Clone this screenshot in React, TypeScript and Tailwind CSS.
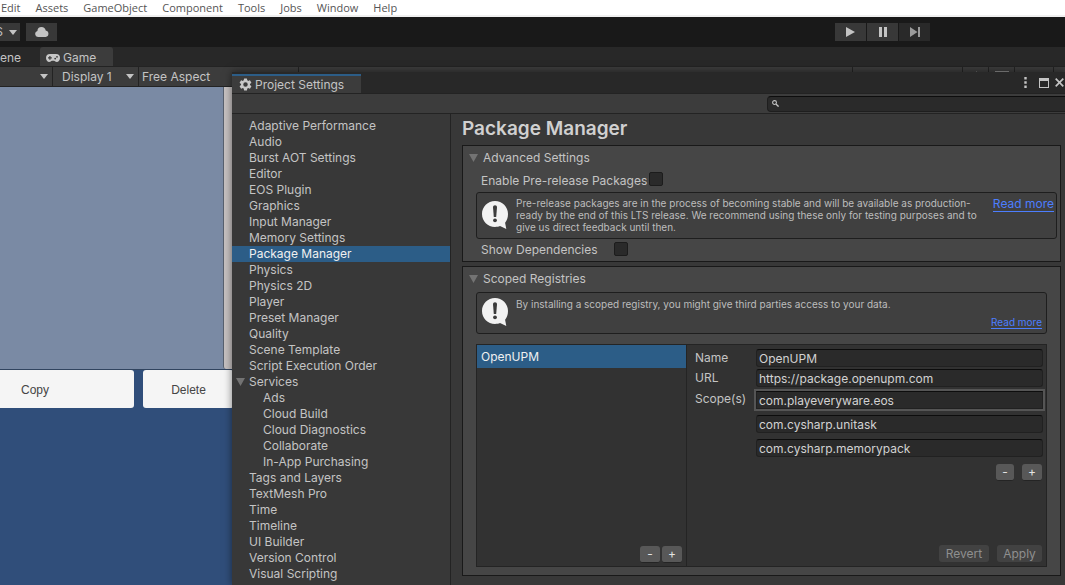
import { useState } from 'react';
import type { ReactNode } from 'react';

const menus = ['Edit', 'Assets', 'GameObject', 'Component', 'Tools', 'Jobs', 'Window', 'Help'];

const settings = [
  { name: 'Adaptive Performance' },
  { name: 'Audio' },
  { name: 'Burst AOT Settings' },
  { name: 'Editor' },
  { name: 'EOS Plugin' },
  { name: 'Graphics' },
  { name: 'Input Manager' },
  { name: 'Memory Settings' },
  { name: 'Package Manager' },
  { name: 'Physics' },
  { name: 'Physics 2D' },
  { name: 'Player' },
  { name: 'Preset Manager' },
  { name: 'Quality' },
  { name: 'Scene Template' },
  { name: 'Script Execution Order' },
  { name: 'Services', parent: true },
  { name: 'Ads', child: true },
  { name: 'Cloud Build', child: true },
  { name: 'Cloud Diagnostics', child: true },
  { name: 'Collaborate', child: true },
  { name: 'In-App Purchasing', child: true },
  { name: 'Tags and Layers' },
  { name: 'TextMesh Pro' },
  { name: 'Time' },
  { name: 'Timeline' },
  { name: 'UI Builder' },
  { name: 'Version Control' },
  { name: 'Visual Scripting' },
];

const scopes = ['com.playeveryware.eos', 'com.cysharp.unitask', 'com.cysharp.memorypack'];

const fieldClass =
  'h-[18px] w-full min-w-0 border border-[#212121] border-t-[#0d0d0d] bg-[#2a2a2a] px-0.5 text-[#d2d2d2] outline-none';

const smallButton =
  'flex h-[17px] items-center justify-center rounded-[3px] border-b border-[#242424] bg-[#585858] text-[#e4e4e4]';

function Caret() {
  return (
    <svg viewBox="0 0 8 5" className="h-[5px] w-2 shrink-0" fill="#c4c4c4">
      <path d="M0 0h8L4 5z" />
    </svg>
  );
}

function Fold() {
  return (
    <svg viewBox="0 0 9 8" className="h-2 w-[9px] shrink-0" fill="#737373">
      <path d="M0 0h9L4.500 8z" />
    </svg>
  );
}

function InfoBubble() {
  return (
    <svg viewBox="0 0 26 28" className="h-7 w-[26px] shrink-0">
      <path
        d="M13 0C20.200 0 26 5.700 26 13c0 3.900-1.200 6.700-2.900 8.800L24.300 28l-6.300-2.900c-1.400.6-3.400.9-5 .9C5.800 26 0 20.300 0 13S5.800 0 13 0z"
        fill="#f2f2f2"
      />
      <path d="M11 6.300C11 5 11.800 4.300 13 4.300s2 .7 2 2L14.200 16h-2.400z" fill="#3c3c3c" />
      <circle cx="13" cy="19.300" r="1.900" fill="#3c3c3c" />
    </svg>
  );
}

function Gamepad() {
  return (
    <svg viewBox="0 0 14 8" className="h-2 w-3.5 shrink-0">
      <path
        d="M4 0h6a4 4 0 0 1 4 4c0 2.300-1.500 4-3.200 4C9.400 8 9 6.700 8 6.700H6C5 6.700 4.600 8 3.200 8 1.500 8 0 6.300 0 4a4 4 0 0 1 4-4z"
        fill="#c8c8c8"
      />
      <path d="M3.300 2h1.200v1.300h1.300v1.200H4.500v1.300H3.300V4.500H2V3.300h1.300z" fill="#3c3c3c" />
      <circle cx="11" cy="2.800" r="0.900" fill="#3c3c3c" />
      <circle cx="9.200" cy="4.600" r="0.900" fill="#3c3c3c" />
    </svg>
  );
}

function Gear() {
  return (
    <svg viewBox="0 0 24 24" className="h-[15px] w-[15px] shrink-0" fill="#c8c8c8">
      <path d="M19.140 12.940c.04-.3.060-.61.060-.94s-.02-.64-.07-.94l2.030-1.580a.49.49 0 0 0 .12-.61l-1.920-3.320a.49.49 0 0 0-.59-.22l-2.390.96a7 7 0 0 0-1.620-.94l-.36-2.540A.48.48 0 0 0 13.920 2.400h-3.840a.48.48 0 0 0-.47.410l-.36 2.540a7.400 7.400 0 0 0-1.620.94l-2.390-.96a.49.49 0 0 0-.59.220L2.740 8.870a.48.48 0 0 0 .12.610l2.030 1.580a6 6 0 0 0 0 1.880l-2.030 1.580a.49.49 0 0 0-.12.610l1.920 3.320c.12.220.37.290.59.220l2.390-.96c.5.380 1.030.7 1.620.94l.36 2.540c.05.240.24.410.480.410h3.840c.24 0 .44-.17.470-.41l.36-2.540a7 7 0 0 0 1.620-.94l2.390.96c.22.080.47 0 .59-.22l1.920-3.320a.48.48 0 0 0-.12-.61zM12 15.600a3.600 3.600 0 1 1 0-7.200 3.600 3.600 0 0 1 0 7.200z" />
    </svg>
  );
}

function HelpBox({ children }: { children: ReactNode }) {
  return (
    <div className="flex rounded-[3px] border border-[#1e1e1e] bg-[#404040] pl-[5px] text-[10px] leading-3 text-[#bdbdbd]">
      {children}
    </div>
  );
}

function Section({ title, children }: { title: string; children: ReactNode }) {
  return (
    <section className="border border-[#191919] bg-[#464646]">
      <h2>
        <button className="flex h-[23px] items-center gap-[5px] pl-1.5">
          <Fold />
          {title}
        </button>
      </h2>
      {children}
    </section>
  );
}

function EditorToolbar() {
  const button = 'flex h-[18px] w-[31px] items-center justify-center bg-[#383838]';
  return (
    <div className="flex h-[30px] shrink-0 items-center justify-between bg-[#191919] pr-[135px]">
      <div className="flex gap-1.5">
        <button className="flex h-[18px] w-5 items-center justify-end gap-1.5 overflow-hidden bg-[#383838] pr-[3px]">
          <span>S</span>
          <Caret />
        </button>
        <button aria-label="Cloud" className={button}>
          <svg viewBox="0 0 14 10" className="h-2.5 w-3.5" fill="#c4c4c4">
            <path d="M3 10a3 3 0 0 1-.6-5.900A4.300 4.300 0 0 1 6.500 0a4.300 4.300 0 0 1 4.200 3.500A3.300 3.300 0 0 1 10.700 10z" />
          </svg>
        </button>
      </div>
      <div className="flex gap-px">
        <button aria-label="Play" className={button}>
          <svg viewBox="0 0 9 10" className="h-2.5 w-[9px]" fill="#c4c4c4">
            <path d="M0 0l9 5-9 5z" />
          </svg>
        </button>
        <button aria-label="Pause" className={button}>
          <svg viewBox="0 0 8 10" className="h-2.5 w-2" fill="#c4c4c4">
            <path d="M0 0h3v10H0zM5 0h3v10H5z" />
          </svg>
        </button>
        <button aria-label="Step" className="flex h-[18px] w-[31px] items-center justify-center bg-[#292929]">
          <svg viewBox="0 0 10 10" className="h-2.5 w-2.5" fill="#9a9a9a">
            <path d="M0 0l7.500 5L0 10zM8 0h2v10H8z" />
          </svg>
        </button>
      </div>
    </div>
  );
}

function GameView() {
  return (
    <div className="flex min-h-0 flex-1 flex-col">
      <div className="flex h-[19px] shrink-0 bg-[#282828]">
        <button className="flex w-10 items-center pt-0.5">ene</button>
        <button className="flex w-[73px] items-center gap-[3px] rounded-t-[3px] bg-[#3c3c3c] pl-1.5 pt-0.5">
          <Gamepad />
          Game
        </button>
      </div>
      <div className="flex h-[21px] shrink-0 border-y border-[#232323] bg-[#3c3c3c]">
        <button aria-label="View" className="flex w-[52px] items-center justify-end pr-1">
          <Caret />
        </button>
        <div className="flex w-[86px] items-center border-l border-[#232323] pr-1">
          <select aria-label="Display" className="min-w-0 flex-1 appearance-none bg-transparent pl-[9px] outline-none">
            <option>Display 1</option>
          </select>
          <Caret />
        </div>
        <div className="flex w-40 items-center border-l border-[#232323]">
          <select aria-label="Aspect" className="w-full appearance-none bg-transparent pl-[3px] outline-none">
            <option>Free Aspect</option>
          </select>
        </div>
        <div className="flex-1 border-l border-[#232323]" />
        <div className="w-[110px] border-l border-[#232323]" />
        <button aria-label="Mute" className="flex w-[26px] items-center justify-center border-l border-[#232323]">
          <svg viewBox="0 0 10 12" className="h-3 w-2.5" fill="#8a8a8a">
            <path d="M0 4h2l4-4v12L2 8H0z" />
          </svg>
        </button>
        <button aria-label="Shortcuts" className="flex w-[26px] items-center justify-center border-l border-[#232323]">
          <svg viewBox="0 0 14 11" className="h-[11px] w-3.5" fill="#8a8a8a">
            <path d="M0 0h14v11H0z" />
          </svg>
        </button>
        <div className="w-[39px] border-l border-[#232323]" />
        <div className="w-3 border-l border-[#232323]" />
      </div>
      <div className="min-h-0 flex-1 bg-[#304e7a] font-['Liberation_Sans',sans-serif] text-[#444]">
        <div className="flex h-[283px] border-b border-[#31445f] bg-[#7a8aa4]">
          <div className="w-[223px]" />
          <div className="w-5 rounded-bl-[3px] border-l border-[#57606e] bg-[#c6c1c1]" />
        </div>
        <div className="flex gap-[9px]">
          <button className="-ml-16 h-[38px] w-[198px] rounded-[3px] bg-[#f5f5f5] pt-0.5">Copy</button>
          <button className="h-[38px] w-[91px] rounded-[3px] bg-[#f5f5f5] pt-0.5">Delete</button>
        </div>
      </div>
    </div>
  );
}

function AdvancedSettings() {
  return (
    <Section title="Advanced Settings">
      <div className="pb-1 pl-[13px] pr-[3px]">
        <div className="flex h-[23px] items-start pl-[5px]">
          <label htmlFor="prerelease" className="pt-1">Enable Pre-release Packages</label>
          <input
            id="prerelease"
            type="checkbox"
            className="ml-0.5 mt-[3px] h-3.5 w-3.5 appearance-none rounded-[2px] border border-[#1c1c1c] bg-[#2a2a2a]"
          />
        </div>
        <HelpBox>
          <div className="flex w-full items-start gap-2 pb-[5px] pt-1">
            <div className="pt-1">
              <InfoBubble />
            </div>
            <p className="flex-1">
              Pre-release packages are in the process of becoming stable and will be available as production-ready by
              the end of this LTS release. We recommend using these only for testing purposes and to give us direct
              feedback until then.
            </p>
            <a href="#prerelease" className="mr-0.5 border-b border-[#4c7eff] text-[12px] leading-[14px] text-[#4c7eff]">
              Read more
            </a>
          </div>
        </HelpBox>
        <div className="flex h-[18px] items-start pl-[5px] pt-[3px]">
          <label htmlFor="dependencies" className="w-[133px]">Show Dependencies</label>
          <input
            id="dependencies"
            type="checkbox"
            className="h-3.5 w-3.5 appearance-none rounded-[2px] border border-[#1c1c1c] bg-[#2a2a2a]"
          />
        </div>
      </div>
    </Section>
  );
}

function ScopedRegistries() {
  return (
    <Section title="Scoped Registries">
      <div className="pb-2 pl-[13px] pr-[13px] pt-0.5">
        <HelpBox>
          <div className="flex h-10 w-full items-start gap-2 pt-[5px]">
            <InfoBubble />
            <p className="flex-1">
              By installing a scoped registry, you might give third parties access to your data.
            </p>
            <a href="#registries" className="mb-1 mr-1 self-end border-b border-[#4c7eff] text-[#4c7eff]">
              Read more
            </a>
          </div>
        </HelpBox>

        <div className="mt-2.5 flex h-[223px] border border-[#242424] bg-[#323232]">
          <div className="flex w-[210px] shrink-0 flex-col justify-between border-r border-[#242424]">
            <button className="h-[23px] w-full bg-[#2c5d87] pl-1 text-left text-[#f0f0f0]">OpenUPM</button>
            <div className="flex justify-end gap-0.5 pb-[3px] pr-1">
              <button aria-label="Remove registry" className={`${smallButton} w-5`}>-</button>
              <button aria-label="Add registry" className={`${smallButton} w-5`}>+</button>
            </div>
          </div>

          <form className="flex min-w-0 flex-1 flex-col justify-between pb-1 pl-2 pr-[3px] pt-1">
            <div>
              <div className="flex items-center">
                <label htmlFor="name" className="w-[61px] shrink-0">Name</label>
                <input id="name" defaultValue="OpenUPM" className={`${fieldClass} rounded-[3px]`} />
              </div>
              <div className="mt-0.5 flex items-center">
                <label htmlFor="url" className="w-[61px] shrink-0">URL</label>
                <input id="url" defaultValue="https://package.openupm.com" className={`${fieldClass} rounded-[3px]`} />
              </div>
              <div className="mt-1 flex items-start">
                <label htmlFor="scope-0" className="w-[61px] shrink-0 leading-4">Scope(s)</label>
                <div className="flex min-w-0 flex-1 flex-col gap-1.5">
                  {scopes.map((scope, i) => (
                    <input
                      key={scope}
                      id={`scope-${i}`}
                      aria-label="Scope"
                      defaultValue={scope}
                      className={`${fieldClass} ${i === 0 ? 'ring-2 ring-[#555]' : 'rounded-[3px]'}`}
                    />
                  ))}
                </div>
              </div>
              <div className="mt-[7px] flex justify-end gap-2 pr-px">
                <button type="button" aria-label="Remove scope" className={`${smallButton} w-[18px]`}>-</button>
                <button type="button" aria-label="Add scope" className={`${smallButton} w-5`}>+</button>
              </div>
            </div>
            <div className="flex justify-end gap-2 pr-px text-[#8f8f8f]">
              <button type="button" className="h-[17px] w-[50px] rounded-[3px] bg-[#424242]">Revert</button>
              <button type="button" className="h-[17px] w-[45px] rounded-[3px] bg-[#424242]">Apply</button>
            </div>
          </form>
        </div>
      </div>
    </Section>
  );
}

function ProjectSettings() {
  const [selected, setSelected] = useState('Package Manager');

  return (
    <div className="absolute bottom-0 left-[232px] right-0 top-[72px] flex flex-col overflow-hidden bg-[#383838] shadow-[0_0_8px_rgba(0,0,0,0.5)]">
      <header className="flex h-[21px] shrink-0 justify-between bg-[#282828]">
        <div className="mt-0.5 flex w-[129px] items-center gap-0.5 border-t-2 border-[#2c5d87] bg-[#3c3c3c] pl-1.5">
          <Gear />
          Project Settings
        </div>
        <div className="flex items-center gap-1.5 pr-px text-[#c4c4c4]">
          <button aria-label="Options" className="pr-1.5">
            <svg viewBox="0 0 3 11" className="h-[11px] w-[3px]" fill="currentColor">
              <path d="M0.300 0h2.400v2.500H0.300zM0.300 4.200h2.400v2.500H0.300zM0.300 8.500h2.400V11H0.300z" />
            </svg>
          </button>
          <button aria-label="Maximize">
            <svg viewBox="0 0 10 10" className="h-2.5 w-2.5" fill="currentColor">
              <path d="M0 0h10v10H0zM1 3v6h8V3z" fillRule="evenodd" />
            </svg>
          </button>
          <button aria-label="Close">
            <svg viewBox="0 0 9 9" className="h-[9px] w-[9px]" fill="none" stroke="currentColor" strokeWidth="1.700">
              <path d="M0.700 0.700l7.600 7.600M8.300 0.700L0.700 8.300" />
            </svg>
          </button>
        </div>
      </header>

      <div className="flex h-[21px] shrink-0 items-center justify-end border-y border-[#232323] bg-[#3c3c3c]">
        <div className="flex h-4 w-[298px] items-center gap-1 rounded-l-[4px] border border-r-0 border-[#1e1e1e] border-t-[#0d0d0d] bg-[#2a2a2a] pl-1">
          <svg viewBox="0 0 8 8" className="h-[7px] w-[7px] shrink-0" fill="none" stroke="#c4c4c4">
            <circle cx="2.900" cy="2.900" r="2.200" strokeWidth="1.200" />
            <path d="M4.500 4.500l3 3" strokeWidth="1.600" />
          </svg>
          <input aria-label="Search" className="min-w-0 flex-1 bg-transparent outline-none" />
        </div>
      </div>

      <div className="flex min-h-0 flex-1">
        <nav className="w-[219px] shrink-0 border-r border-[#232323] pt-1">
          <ul>
            {settings.map((item) => (
              <li key={item.name}>
                <button
                  onClick={() => setSelected(item.name)}
                  className={`flex h-4 w-full items-center ${item.child ? 'pl-[31px]' : item.parent ? 'gap-1 pl-1' : 'pl-[17px]'} ${
                    selected === item.name ? 'bg-[#2c5d87] text-[#f0f0f0]' : ''
                  }`}
                >
                  {item.parent && <Fold />}
                  {item.name}
                </button>
              </li>
            ))}
          </ul>
        </nav>

        <main className="min-w-0 flex-1 pl-[11px] pr-1">
          <h1 className="flex h-[31px] items-center pb-0.5 text-[19px] font-semibold text-[#d0d0d0]">Package Manager</h1>
          <div className="flex flex-col gap-1">
            <AdvancedSettings />
            <ScopedRegistries />
          </div>
        </main>
      </div>
    </div>
  );
}

export default function App() {
  return (
    <div className="relative flex h-screen flex-col overflow-hidden bg-[#191919] font-['Inter',sans-serif] text-[12px] leading-4 text-[#c4c4c4]">
      <nav className="flex h-[17px] shrink-0 gap-[15px] border-b-2 border-[#f0f0f0] bg-white pl-px font-['Open_Sans',sans-serif] text-[11px] text-[#555]">
        {menus.map((menu) => (
          <button key={menu} className="leading-[14px]">
            {menu}
          </button>
        ))}
      </nav>
      <EditorToolbar />
      <GameView />
      <ProjectSettings />
    </div>
  );
}
